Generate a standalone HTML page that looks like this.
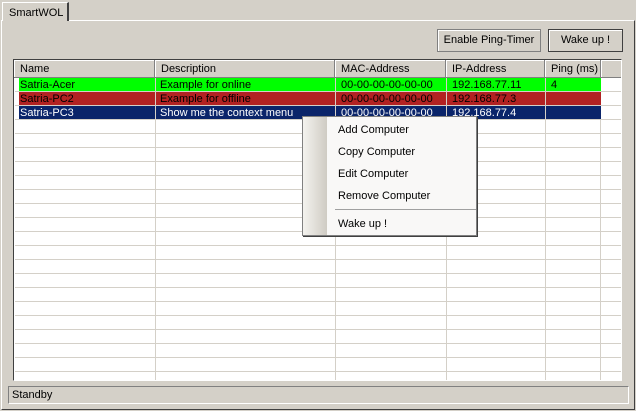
<!DOCTYPE html>
<html><head><style>
*{margin:0;padding:0;box-sizing:border-box}
body{width:636px;height:411px;background:#d4d0c8;position:relative;overflow:hidden;font-family:"Liberation Sans",sans-serif;font-size:11px;color:#000}
.a{position:absolute}
.panel{left:1px;top:20px;width:634px;height:390px;border-left:1px solid #fff;border-top:1px solid #fff;border-right:1px solid #404040;border-bottom:1px solid #404040}
.tab{left:2px;top:2px;width:67px;height:19px;border:1px solid #fff;border-bottom:none;border-right:2px solid #404040;background:#d4d0c8;padding:4px 0 0 6px}
.btn{border:1px solid #808080;background:#d4d0c8;text-align:center;line-height:21px;box-shadow:inset 1px 1px #fff}
.list{left:13px;top:59px;width:609px;height:322px;border:1px solid #808080;border-top-color:#404040;border-left-color:#404040;background:#fff;overflow:hidden;border-right-color:#fff;border-bottom-color:#fff}
.grid{left:1px;top:18px;width:606px;height:310px;background:repeating-linear-gradient(to bottom,transparent 0,transparent 13px,#d4d0c8 13px,#d4d0c8 14px)}
.vl{top:18px;width:1px;height:310px;background:#d4d0c8}
.hdr{top:0;height:18px;border-right:1px solid #808080;border-bottom:1px solid #808080;box-shadow:inset 1px 1px #fff;padding:3px 0 0 6px;background:#d4d0c8}
.row{left:5px;width:582px;height:13px;line-height:14px}
.row span{position:absolute;top:0}
.menu{left:302px;top:116px;width:175px;height:120px;background:#f9f8f7;border:1px solid #808080;box-shadow:1px 1px #404040}
.menu .strip{left:0;top:0;width:24px;height:118px;background:linear-gradient(to right,#f4f3ef,#cfcbc3)}
.menu div.i{position:absolute;left:35px}
</style></head><body>
<div class="a panel"></div>
<div class="a tab">SmartWOL</div>
<div class="a btn" style="left:437px;top:29px;width:104px;height:23px">Enable Ping-Timer</div>
<div class="a btn" style="left:548px;top:29px;width:75px;height:23px;border-color:#404040">Wake up !</div>
<div class="a list">
 <div class="a grid"></div>
 <div class="a vl" style="left:141px"></div>
 <div class="a vl" style="left:321px"></div>
 <div class="a vl" style="left:432px"></div>
 <div class="a vl" style="left:531px"></div>
 <div class="a vl" style="left:586px"></div>
 <div class="a hdr" style="left:0;width:141px">Name</div>
 <div class="a hdr" style="left:141px;width:180px">Description</div>
 <div class="a hdr" style="left:321px;width:111px">MAC-Address</div>
 <div class="a hdr" style="left:432px;width:99px">IP-Address</div>
 <div class="a hdr" style="left:531px;width:56px">Ping (ms)</div>
 <div class="a hdr" style="left:587px;width:30px;border-right:none"></div>
 <div class="a row" style="top:18px;background:#00ff00;color:#000"><span style="left:1px">Satria-Acer</span><span style="left:141px">Example for online</span><span style="left:322px">00-00-00-00-00-00</span><span style="left:433px">192.168.77.11</span><span style="left:532px">4</span></div>
 <div class="a row" style="top:32px;background:#b22222;color:#000"><span style="left:1px">Satria-PC2</span><span style="left:141px">Example for offline</span><span style="left:322px">00-00-00-00-00-00</span><span style="left:433px">192.168.77.3</span></div>
 <div class="a row" style="top:46px;background:#0a246a;color:#fff"><span style="left:1px">Satria-PC3</span><span style="left:141px">Show me the context menu</span><span style="left:322px">00-00-00-00-00-00</span><span style="left:433px">192.168.77.4</span></div>
 <div class="a" style="left:141px;top:18px;width:1px;height:41px;background:#d4d0c8"></div>
 <div class="a" style="left:321px;top:18px;width:1px;height:41px;background:#d4d0c8"></div>
 <div class="a" style="left:432px;top:18px;width:1px;height:41px;background:#d4d0c8"></div>
 <div class="a" style="left:531px;top:18px;width:1px;height:41px;background:#d4d0c8"></div>
</div>
<div class="a menu">
 <div class="a strip"></div>
 <div class="i" style="top:7px">Add Computer</div>
 <div class="i" style="top:29px">Copy Computer</div>
 <div class="i" style="top:51px">Edit Computer</div>
 <div class="i" style="top:73px">Remove Computer</div>
 <div class="a" style="left:32px;top:92px;width:141px;height:1px;background:#a0a0a0"></div>
 <div class="i" style="top:101px">Wake up !</div>
</div>
<div class="a" style="left:8px;top:386px;width:621px;height:18px;border:1px solid #808080;border-right-color:#fff;border-bottom-color:#fff;padding:2px 0 0 3px">Standby</div>
</body></html>
